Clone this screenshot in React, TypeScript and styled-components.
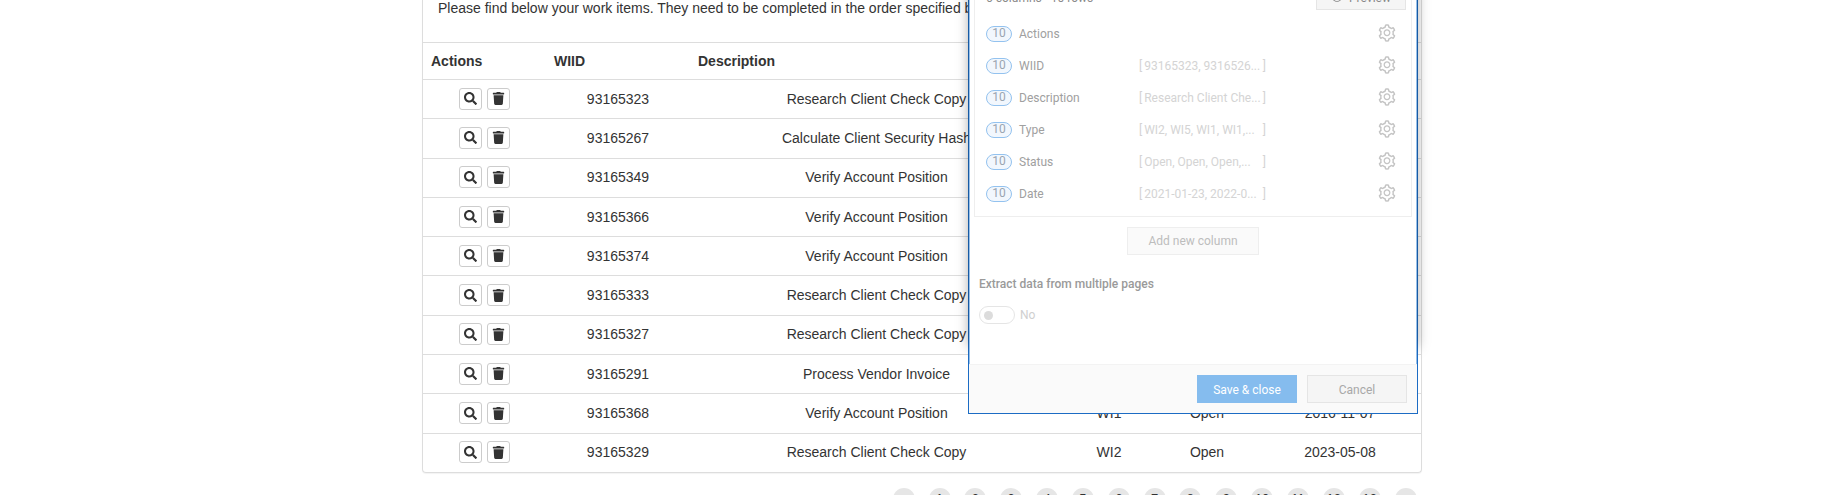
import React from 'react';
import styled, { createGlobalStyle } from 'styled-components';
import { AiOutlineEye, AiOutlineSetting } from 'react-icons/ai';
import { FaSearch, FaTrash } from 'react-icons/fa';

const GlobalStyle = createGlobalStyle`
  html, body {
    margin: 0;
    height: 495px;
    overflow: hidden;
    background: #fff;
  }
`;

const Page = styled.div`
  position: relative;
  width: 1000px;
  margin: 0 auto;
  font-family: "Liberation Sans", Arial, sans-serif;
  font-size: 14px;
  color: #333;
`;

const Card = styled.div`
  border: 1px solid #ddd;
  border-top: 0;
  border-radius: 0 0 4px 4px;
  box-shadow: 0 1px 1px rgba(0, 0, 0, 0.05);
`;

const Intro = styled.p`
  margin: 0;
  padding: 0 15px 26px;
  line-height: 16px;
  white-space: nowrap;
  overflow: hidden;
`;

const Row = styled.div<{ $head?: boolean }>`
  display: grid;
  grid-template-columns: 123px 144px 373px 92px 104px 1fr;
  align-items: center;
  box-sizing: border-box;
  height: ${(p) => (p.$head ? '37px' : '39.3px')};
  padding-bottom: ${(p) => (p.$head ? 0 : '1px')};
  border-top: 1px solid #ddd;
  font-weight: ${(p) => (p.$head ? 700 : 400)};
`;

const HeadCell = styled.div`
  padding-left: 8px;
`;

const Cell = styled.div`
  display: flex;
  justify-content: center;
  gap: 5px;
`;

const IconButton = styled.span`
  display: flex;
  align-items: center;
  justify-content: center;
  box-sizing: border-box;
  width: 23px;
  height: 22px;
  border: 1px solid #ccc;
  border-radius: 3px;
  background: #fff;
  color: #333;
  font-size: 13px;
`;

const Pager = styled.div`
  display: flex;
  justify-content: flex-end;
  gap: 13.85px;
  margin-top: 15px;
  padding-right: 5.5px;
`;

const PageDot = styled.span`
  width: 22px;
  height: 22px;
  border-radius: 50%;
  background: #e6e6e6;
  font-size: 13px;
  line-height: 22px;
  text-align: center;
`;

// The dialog runs past the top of the photographed window
const Modal = styled.div`
  position: absolute;
  top: -40px;
  right: 4px;
  z-index: 2;
  display: flex;
  flex-direction: column;
  box-sizing: border-box;
  width: 450px;
  height: 454px;
  border: 1px solid #1c6cc4;
  background: #fff;
  font-family: Roboto, "Open Sans", sans-serif;
  font-size: 12px;

  &::before {
    content: '';
    position: absolute;
    inset: 0 0 66px 0;
    z-index: -1;
    box-shadow: 0 0 12px rgba(0, 0, 0, 0.35);
  }
`;

const ModalBody = styled.div`
  flex: 1;
  padding: 9px 5px 0;
  background: #fff;
  box-shadow: inset 1px 0 0 rgba(47, 127, 209, 0.5), inset -1px 0 0 rgba(47, 127, 209, 0.5);
`;

const Panel = styled.div`
  box-sizing: border-box;
  border: 1px solid #eee;
  padding: 0 5px 6px 11px;
`;

const PanelHead = styled.div`
  display: flex;
  justify-content: space-between;
  align-items: center;
  padding: 11px 0 8px;
  color: #8a8a8a;
`;

const PanelCount = styled.span`
  padding-top: 4px;
`;

const PreviewButton = styled.span`
  display: flex;
  align-items: center;
  justify-content: center;
  gap: 6px;
  box-sizing: border-box;
  width: 90px;
  height: 28px;
  padding-top: 4px;
  border: 1px solid #e5e5e5;
  background: #f5f5f5;
  color: #888;
  font-size: 12px;
`;

const ColumnRow = styled.div`
  display: grid;
  grid-template-columns: 26px 127px 1fr 20px;
  align-items: center;
  height: 32px;
  padding-right: 9px;
`;

const CountBadge = styled.span`
  box-sizing: border-box;
  height: 16px;
  border: 1px solid #93c2ef;
  border-radius: 8px;
  background: #f2f7fd;
  color: #9aa5b1;
  font-size: 12px;
  line-height: 13px;
  text-align: center;
`;

const ColumnName = styled.span`
  padding-left: 7px;
  color: #a0a0a0;
`;

// Brackets sit at fixed ends, the values are truncated to fit between them
const Sample = styled.span`
  display: flex;
  width: 127px;
  color: #d4d4d4;
  font-size: 12px;
  white-space: nowrap;
`;

const SampleValue = styled.span`
  flex: 1;
  padding-left: 2px;
`;

const Gear = styled(AiOutlineSetting)`
  color: #c4c4c4;
  font-size: 20px;
  margin-top: -2px;
`;

const AddButton = styled.span`
  display: block;
  box-sizing: border-box;
  width: 132px;
  height: 28px;
  margin: 10px auto 0;
  border: 1px solid #eee;
  background: #fafafa;
  color: #bdbdbd;
  line-height: 26px;
  text-align: center;
`;

const SectionLabel = styled.div`
  margin: 21px 0 0;
  padding-left: 5px;
  color: #9a9a9a;
  font-weight: 500;
  line-height: 16px;
`;

const ToggleRow = styled.div`
  display: flex;
  align-items: center;
  gap: 5px;
  margin-top: 14px;
  padding-left: 5px;
  color: #cfcfcf;
`;

const Toggle = styled.span`
  display: flex;
  align-items: center;
  box-sizing: border-box;
  width: 36px;
  height: 18px;
  padding-left: 4px;
  border: 1px solid #e5e5e5;
  border-radius: 9px;

  &::before {
    content: '';
    width: 9px;
    height: 9px;
    border-radius: 50%;
    background: #dcdcdc;
  }
`;

const Footer = styled.div`
  display: flex;
  justify-content: flex-end;
  align-items: center;
  gap: 10px;
  height: 48px;
  padding-right: 10px;
  border-top: 1px solid #f3f3f3;
  background: #fafafa;
`;

const FooterButton = styled.span<{ $primary?: boolean }>`
  box-sizing: border-box;
  width: 100px;
  height: 28px;
  border: 1px solid ${(p) => (p.$primary ? '#85bcee' : '#e5e5e5')};
  background: ${(p) => (p.$primary ? '#85bcee' : '#f5f5f5')};
  color: ${(p) => (p.$primary ? '#fff' : '#a8a8a8')};
  line-height: 28px;
  text-align: center;
`;

const heads = ['Actions', 'WIID', 'Description', 'Type', 'Status', 'Date'];

const items = [
  ['93165323', 'Research Client Check Copy', 'WI2', 'Open', '2021-01-23'],
  ['93165267', 'Calculate Client Security Hash', 'WI5', 'Open', '2022-04-11'],
  ['93165349', 'Verify Account Position', 'WI1', 'Open', '2019-06-30'],
  ['93165366', 'Verify Account Position', 'WI1', 'Open', '2020-02-14'],
  ['93165374', 'Verify Account Position', 'WI1', 'Open', '2017-09-05'],
  ['93165333', 'Research Client Check Copy', 'WI2', 'Open', '2018-12-19'],
  ['93165327', 'Research Client Check Copy', 'WI2', 'Open', '2022-08-02'],
  ['93165291', 'Process Vendor Invoice', 'WI3', 'Open', '2021-10-27'],
  ['93165368', 'Verify Account Position', 'WI1', 'Open', '2016-11-07'],
  ['93165329', 'Research Client Check Copy', 'WI2', 'Open', '2023-05-08'],
];

const columns = [
  { name: 'Actions', sample: '' },
  { name: 'WIID', sample: '93165323, 9316526...' },
  { name: 'Description', sample: 'Research Client Che...' },
  { name: 'Type', sample: 'WI2, WI5, WI1, WI1,...' },
  { name: 'Status', sample: 'Open, Open, Open,...' },
  { name: 'Date', sample: '2021-01-23, 2022-0...' },
];

const pages = ['‹', '1', '2', '3', '4', '5', '6', '7', '8', '9', '10', '11', '12', '13', '›'];

const App: React.FC = () => (
  <>
    <GlobalStyle />
    <Page>
      <Card>
        <Intro>Please find below your work items. They need to be completed in the order specified by the priority column.</Intro>
        <Row $head>
          {heads.map((h) => (
            <HeadCell key={h}>{h}</HeadCell>
          ))}
        </Row>
        {items.map(([id, description, type, status, date]) => (
          <Row key={id}>
            <Cell>
              <IconButton><FaSearch /></IconButton>
              <IconButton><FaTrash /></IconButton>
            </Cell>
            <Cell>{id}</Cell>
            <Cell>{description}</Cell>
            <Cell>{type}</Cell>
            <Cell>{status}</Cell>
            <Cell>{date}</Cell>
          </Row>
        ))}
      </Card>
      <Pager>
        {pages.map((p) => (
          <PageDot key={p}>{p}</PageDot>
        ))}
      </Pager>
      <Modal>
        <ModalBody>
          <Panel>
            <PanelHead>
              <PanelCount>6 columns · 10 rows</PanelCount>
              <PreviewButton><AiOutlineEye />Preview</PreviewButton>
            </PanelHead>
            {columns.map((c) => (
              <ColumnRow key={c.name}>
                <CountBadge>10</CountBadge>
                <ColumnName>{c.name}</ColumnName>
                {c.sample ? (
                  <Sample>
                    <span>[</span>
                    <SampleValue>{c.sample}</SampleValue>
                    <span>]</span>
                  </Sample>
                ) : (
                  <span />
                )}
                <Gear />
              </ColumnRow>
            ))}
          </Panel>
          <AddButton>Add new column</AddButton>
          <SectionLabel>Extract data from multiple pages</SectionLabel>
          <ToggleRow>
            <Toggle />
            No
          </ToggleRow>
        </ModalBody>
        <Footer>
          <FooterButton $primary>Save &amp; close</FooterButton>
          <FooterButton>Cancel</FooterButton>
        </Footer>
      </Modal>
    </Page>
  </>
);

export default App;
